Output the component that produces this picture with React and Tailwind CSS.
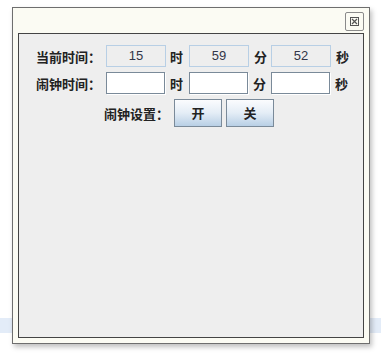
import React from 'react'

const cjk = { fontFamily: '"Noto Sans CJK SC", "Noto Sans", sans-serif' }
const latin = { fontFamily: '"Liberation Sans", Arial, sans-serif' }

function ShowField({ value }) {
  return (
    <div
      className="w-[60px] h-[22px] border border-[#b8cfe5] bg-[#eeeeee] flex items-center justify-center text-[13px] text-[#333648]"
      style={latin}
    >
      {value}
    </div>
  )
}

function InputField() {
  return (
    <div className="w-[59px] h-[22px] border border-[#7a8a99] bg-white shadow-[1px_1px_0_#ffffff]" />
  )
}

function Unit({ children, className = '' }) {
  return <span className={`text-[13px] font-bold text-[#222] leading-none ${className}`}>{children}</span>
}

function AppButton({ children }) {
  return (
    <button className="w-[48px] h-[28px] border border-[#7a8a99] bg-gradient-to-b from-[#fbfcfe] via-[#e4edf6] to-[#b8cfe5] flex items-center justify-center text-[13px] font-bold text-[#222]">
      {children}
    </button>
  )
}

export default function App() {
  return (
    <div className="relative w-[381px] h-[356px] bg-white overflow-hidden" style={cjk}>
      {/* desktop strip behind the window */}
      <div className="absolute left-0 right-0 top-[318px] h-[15px] bg-[#e3ecf8]" />

      <div className="absolute left-[12px] top-[7px] w-[358px] h-[337px] border border-[#6e6e6e] bg-[#fbfbf3] shadow-[2px_3px_5px_rgba(0,0,0,0.25)] flex flex-col px-[5px] pb-[5px]">
        {/* title bar */}
        <div className="h-[25px] flex justify-end items-start pt-[4px]">
          <div className="w-[19px] h-[19px] border border-[#8a8a8a] rounded-[2px] flex items-center justify-center bg-[#fbfbf3]">
            <svg width="9" height="9" viewBox="0 0 9 9">
              <rect x="0.5" y="0.5" width="8" height="8" fill="none" stroke="#555" strokeWidth="1" />
              <path d="M2 2 L7 7 M7 2 L2 7" stroke="#555" strokeWidth="1.2" />
            </svg>
          </div>
        </div>

        {/* content pane */}
        <div className="flex-1 border border-[#444] bg-[#eeeeee] pt-[11px]">
          <div className="flex items-center h-[22px]">
            <span className="ml-[17px] w-[60px] whitespace-nowrap text-[13px] font-bold text-[#222] leading-none">当前时间：</span>
            <div className="ml-[10px]"><ShowField value="15" /></div>
            <Unit className="ml-[4px]">时</Unit>
            <div className="ml-[6px]"><ShowField value="59" /></div>
            <Unit className="ml-[5px]">分</Unit>
            <div className="ml-[4px]"><ShowField value="52" /></div>
            <Unit className="ml-[5px]">秒</Unit>
          </div>

          <div className="flex items-center h-[22px] mt-[5px]">
            <span className="ml-[17px] w-[60px] whitespace-nowrap text-[13px] font-bold text-[#222] leading-none">闹钟时间：</span>
            <div className="ml-[10px]"><InputField /></div>
            <Unit className="ml-[5px]">时</Unit>
            <div className="ml-[6px]"><InputField /></div>
            <Unit className="ml-[5px]">分</Unit>
            <div className="ml-[5px]"><InputField /></div>
            <Unit className="ml-[5px]">秒</Unit>
          </div>

          <div className="flex items-center h-[28px] mt-[5px]">
            <span className="ml-[85px] w-[60px] whitespace-nowrap text-[13px] font-bold text-[#222] leading-none">闹钟设置：</span>
            <div className="ml-[10px]"><AppButton>开</AppButton></div>
            <div className="ml-[4px]"><AppButton>关</AppButton></div>
          </div>
        </div>
      </div>
    </div>
  )
}
